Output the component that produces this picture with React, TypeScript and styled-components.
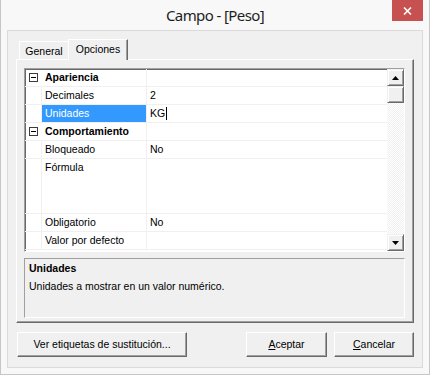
import React from "react";
import styled, { createGlobalStyle, css } from "styled-components";

const GlobalStyle = createGlobalStyle`
  html, body { margin: 0; padding: 0; background: #ffffff; }
  body {
    width: 430px; height: 375px; overflow: hidden;
    font-family: "Liberation Sans", Arial, sans-serif;
    font-size: 10.5px; color: #000;
  }
  * { box-sizing: border-box; }
`;

const Window = styled.div`
  width: 430px;
  height: 375px;
  background: #f8f8f8;
  border: 1px solid #c6c6c6;
  border-top: none;
  padding: 0 6px 6px 6px;
  display: flex;
  flex-direction: column;
`;

const TitleBar = styled.div`
  height: 30px;
  display: grid;
  grid-template-columns: 1fr auto 1fr;
  align-items: start;
`;

const Title = styled.div`
  grid-column: 2;
  font-family: "Noto Sans", "Open Sans", sans-serif;
  font-size: 15px;
  letter-spacing: -0.6px;
  color: #1e1e1e;
  line-height: 30px;
  white-space: nowrap;
`;

const CloseButton = styled.div`
  grid-column: 3;
  justify-self: end;
  width: 31px;
  height: 21px;
  background: #c75050;
  display: flex;
  align-items: center;
  justify-content: center;
`;

const Content = styled.div`
  flex: 1;
  background: #f0f0f0;
  border: 1px solid #dadada;
  padding: 8px 8px 0 8px;
  display: flex;
  flex-direction: column;
`;

const TabStrip = styled.div`
  height: 20px;
  display: flex;
  align-items: flex-end;
  padding-left: 3px;
  position: relative;
  z-index: 1;
`;

const Tab = styled.div<{ $active?: boolean }>`
  background: #f0f0f0;
  border-top: 1px solid #ffffff;
  border-left: 1px solid #ffffff;
  border-right: 1px solid #696969;
  box-shadow: inset -1px 0 0 #a0a0a0;
  display: flex;
  justify-content: center;
  align-items: flex-start;
  white-space: nowrap;
  ${(p) =>
    p.$active
      ? css`
          width: 60px;
          height: 21px;
          margin-bottom: -1px;
          padding-top: 3px;
        `
      : css`
          width: 49px;
          height: 18px;
          padding-top: 3px;
          border-right: none;
          box-shadow: none;
        `}
`;

const Panel = styled.div`
  height: 264px;
  background: #f0f0f0;
  border-top: 1px solid #ffffff;
  border-left: 1px solid #ffffff;
  border-right: 1px solid #696969;
  border-bottom: 1px solid #696969;
  box-shadow: inset -1px -1px 0 #a0a0a0;
  padding: 8px 8px 0 7px;
  display: flex;
  flex-direction: column;
`;

const Grid = styled.div`
  height: 184px;
  background: #ffffff;
  border-top: 1px solid #a0a0a0;
  border-left: 1px solid #a0a0a0;
  border-right: 1px solid #ffffff;
  border-bottom: 1px solid #ffffff;
  box-shadow: inset 1px 1px 0 #696969;
  display: flex;
  overflow: hidden;
`;

const Rows = styled.div`
  flex: 1;
  overflow: hidden;
  display: flex;
  flex-direction: column;
`;

const Row = styled.div<{ $tall?: boolean }>`
  flex: none;
  display: grid;
  grid-template-columns: 17px 105px 1fr;
  height: ${(p) => (p.$tall ? 55 : 18)}px;
  border-bottom: 1px solid #f0f0f0;
  line-height: 17px;
`;

const MarginCell = styled.div<{ $line?: boolean }>`
  border-right: 1px solid ${(p) => (p.$line ? "#f0f0f0" : "transparent")};
  display: flex;
  align-items: flex-start;
  padding: 4px 0 0 4px;
`;

const NameCell = styled.div<{ $selected?: boolean; $category?: boolean }>`
  border-right: 1px solid #f0f0f0;
  padding-left: 3px;
  white-space: nowrap;
  overflow: ${(p) => (p.$category ? "visible" : "hidden")};
  font-weight: ${(p) => (p.$category ? 700 : 400)};
  background: ${(p) => (p.$selected ? "#3399ff" : "transparent")};
  color: ${(p) => (p.$selected ? "#ffffff" : "#000000")};
  position: relative;
  z-index: ${(p) => (p.$category ? 1 : 0)};
`;

const ValueCell = styled.div`
  padding-left: 3px;
  white-space: nowrap;
  display: flex;
  align-items: flex-start;
`;

const Caret = styled.span`
  display: inline-block;
  width: 1px;
  height: 13px;
  background: #000;
  margin-top: 2px;
  margin-left: 1px;
`;

const Expander = styled.div`
  width: 9px;
  height: 9px;
  border: 1px solid #3c3c3c;
  background: #fff;
  display: flex;
  align-items: center;
  justify-content: center;
  &::after {
    content: "";
    width: 5px;
    height: 1px;
    background: #000;
  }
`;

const ScrollBar = styled.div`
  width: 17px;
  display: flex;
  flex-direction: column;
  background-color: #ffffff;
  background-image: repeating-conic-gradient(#f0f0f0 0 25%, #ffffff 0 50%);
  background-size: 2px 2px;
`;

const ScrollPart = styled.div<{ $bottom?: boolean }>`
  width: 17px;
  height: 17px;
  flex: none;
  background: #f0f0f0;
  border-top: 1px solid #f0f0f0;
  border-left: 1px solid #f0f0f0;
  border-right: 1px solid #696969;
  border-bottom: 1px solid #696969;
  box-shadow: inset 1px 1px 0 #ffffff, inset -1px -1px 0 #a0a0a0;
  display: flex;
  align-items: center;
  justify-content: center;
  margin-top: ${(p) => (p.$bottom ? "auto" : "0")};
`;

const Description = styled.div`
  margin-top: 6px;
  height: 60px;
  border-top: 1px solid #a0a0a0;
  border-left: 1px solid #a0a0a0;
  border-right: 1px solid #ffffff;
  border-bottom: 1px solid #ffffff;
  padding: 3px 0 0 4px;
  display: flex;
  flex-direction: column;
  gap: 5px;
  line-height: 13px;
`;

const DescTitle = styled.div`
  font-weight: 700;
`;

const ButtonRow = styled.div`
  margin-top: 9px;
  display: flex;
  align-items: center;
  padding-left: 1px;
  gap: 7px;
`;

const Button = styled.div<{ $w: number; $pushRight?: boolean }>`
  width: ${(p) => p.$w}px;
  height: 25px;
  background: #f0f0f0;
  border-top: 1px solid #ffffff;
  border-left: 1px solid #ffffff;
  border-right: 1px solid #696969;
  border-bottom: 1px solid #696969;
  box-shadow: inset -1px -1px 0 #a0a0a0;
  display: flex;
  align-items: center;
  justify-content: center;
  white-space: nowrap;
  margin-left: ${(p) => (p.$pushRight ? "auto" : "0")};
  padding-bottom: 1px;
`;

const U = styled.span`
  text-decoration: underline;
  text-underline-offset: 1px;
`;

const Arrow = ({ down }: { down?: boolean }) => (
  <svg width="7" height="4" viewBox="0 0 7 4">
    <polygon points={down ? "0,0 7,0 3.5,4" : "3.5,0 7,4 0,4"} fill="#000" />
  </svg>
);

type Item =
  | { kind: "cat"; name: string }
  | { kind: "prop"; name: string; value?: string; selected?: boolean; tall?: boolean; caret?: boolean };

const items: Item[] = [
  { kind: "cat", name: "Apariencia" },
  { kind: "prop", name: "Decimales", value: "2" },
  { kind: "prop", name: "Unidades", value: "KG", selected: true, caret: true },
  { kind: "cat", name: "Comportamiento" },
  { kind: "prop", name: "Bloqueado", value: "No" },
  { kind: "prop", name: "Fórmula", value: "", tall: true },
  { kind: "prop", name: "Obligatorio", value: "No" },
  { kind: "prop", name: "Valor por defecto", value: "" },
];

export default function App() {
  return (
    <>
      <GlobalStyle />
      <Window>
        <TitleBar>
          <Title>Campo - [Peso]</Title>
          <CloseButton>
            <svg width="9" height="8" viewBox="0 0 9 8">
              <path d="M1 0.5 L8 7.5 M8 0.5 L1 7.5" stroke="#fff" strokeWidth="1.6" />
            </svg>
          </CloseButton>
        </TitleBar>
        <Content>
          <TabStrip>
            <Tab>General</Tab>
            <Tab $active>Opciones</Tab>
          </TabStrip>
          <Panel>
            <Grid>
              <Rows>
                {items.map((it, i) =>
                  it.kind === "cat" ? (
                    <Row key={i}>
                      <MarginCell>
                        <Expander />
                      </MarginCell>
                      <NameCell $category>{it.name}</NameCell>
                      <ValueCell />
                    </Row>
                  ) : (
                    <Row key={i} $tall={it.tall}>
                      <MarginCell $line />
                      <NameCell $selected={it.selected}>{it.name}</NameCell>
                      <ValueCell>
                        {it.value}
                        {it.caret && <Caret />}
                      </ValueCell>
                    </Row>
                  )
                )}
              </Rows>
              <ScrollBar>
                <ScrollPart>
                  <Arrow />
                </ScrollPart>
                <ScrollPart />
                <ScrollPart $bottom>
                  <Arrow down />
                </ScrollPart>
              </ScrollBar>
            </Grid>
            <Description>
              <DescTitle>Unidades</DescTitle>
              <div>Unidades a mostrar en un valor numérico.</div>
            </Description>
          </Panel>
          <ButtonRow>
            <Button $w={170}>Ver etiquetas de sustitución...</Button>
            <Button $w={81} $pushRight>
              <span>
                <U>A</U>ceptar
              </span>
            </Button>
            <Button $w={80}>
              <span>
                <U>C</U>ancelar
              </span>
            </Button>
          </ButtonRow>
        </Content>
      </Window>
    </>
  );
}
